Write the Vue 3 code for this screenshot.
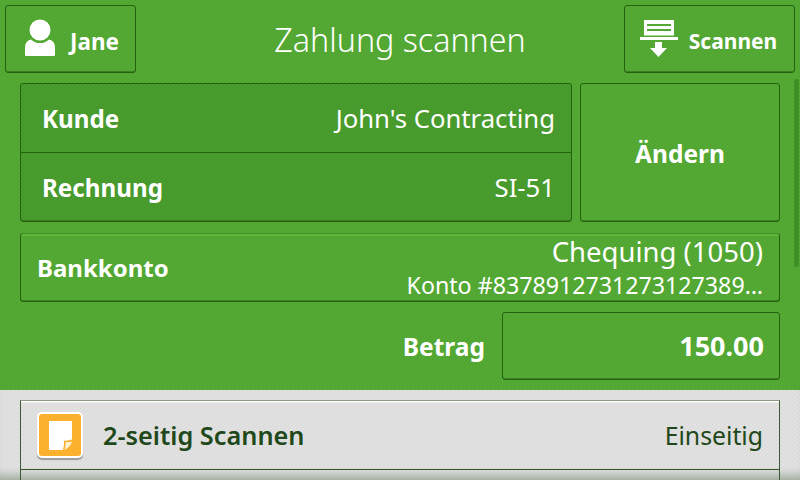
<script setup>
const rows = [
  { label: 'Kunde', value: "John's Contracting" },
  { label: 'Rechnung', value: 'SI-51' },
]
</script>

<template>
  <div class="screen">
    <section class="top">
      <header class="head">
        <button class="btn user">
          <svg width="30" height="38" viewBox="0 0 30 38">
            <circle cx="15" cy="11" r="10.500" fill="#fff" />
            <path d="M0 28q0-6 6-7.600A13 13 0 0 0 24 20.400q6 1.600 6 7.600v8q0 1-1 1H1q-1 0-1-1z" fill="#fff" />
          </svg>
          <span>Jane</span>
        </button>
        <h1>Zahlung scannen</h1>
        <button class="btn scan">
          <svg width="38" height="38" viewBox="0 0 38 38">
            <path d="M4 0h30v15.500H4zM7 4v2h24V4zM7 9v2h24V9z" fill="#fff" fill-rule="evenodd" />
            <rect y="17" width="38" height="3" fill="#fff" />
            <path d="M15 22h7v6h5l-8.500 9L10 28h5z" fill="#fff" />
          </svg>
          <span>Scannen</span>
        </button>
      </header>

      <div class="info">
        <div class="list">
          <div v-for="row in rows" :key="row.label" class="row">
            <strong>{{ row.label }}</strong>
            <span>{{ row.value }}</span>
          </div>
        </div>
        <button class="btn change"><span>Ändern</span></button>
      </div>

      <div class="bank">
        <strong>Bankkonto</strong>
        <div class="bank-values">
          <span class="account">Chequing (1050)</span>
          <span class="number">Konto #8378912731273127389…</span>
        </div>
      </div>

      <div class="amount">
        <strong>Betrag</strong>
        <div class="amount-box">150.00</div>
      </div>
      <i class="scrollbar"></i>
    </section>

    <section class="bottom">
      <div class="option">
        <span class="tile">
          <svg width="23" height="29" viewBox="0 0 23 29">
            <path d="M0 0h23v18.500q-4 1.500-8 1 .5 4.500-1 9.500H0z" fill="#fff" />
            <path d="M15.500 29q1.500-4 1-8 3 .5 6.500-.5-1.500 5.500-7.500 8.500z" fill="#fff3d2" />
          </svg>
        </span>
        <strong>2-seitig Scannen</strong>
        <span class="state">Einseitig</span>
      </div>
      <div class="option next"></div>
    </section>
  </div>
</template>

<style>
html, body { margin: 0; background: #52a832; }
</style>

<style scoped>
.screen {
  width: 800px;
  height: 480px;
  overflow: hidden;
  display: flex;
  flex-direction: column;
  font-family: "Noto Sans", "Open Sans", sans-serif;
  color: #fff;
}
strong { font-weight: 700; }
.top {
  position: relative;
  flex: none;
  height: 390px;
  box-sizing: border-box;
  padding: 5px 5px 0;
  background: linear-gradient(135deg, #55ab36 25%, #4fa530 25% 50%, #55ab36 50% 75%, #4fa530 75%) 0 0 / 4px 4px;
  display: flex;
  flex-direction: column;
}
.scrollbar {
  position: absolute;
  right: 1px;
  top: 79px;
  width: 5px;
  height: 188px;
  background: #3f8f26;
  border-radius: 2px;
}
.head {
  display: grid;
  grid-template-columns: 1fr auto 1fr;
  align-items: center;
  height: 68px;
}
h1 {
  margin: 2px 0 0;
  font-size: 32.200px;
  font-weight: 300;
  line-height: 66px;
}
.btn {
  box-sizing: border-box;
  display: flex;
  align-items: center;
  justify-content: center;
  padding: 0;
  background: transparent;
  border: 1px solid #24620f;
  border-radius: 3px;
  box-shadow: inset 0 -1px 0 #3a8020;
  color: #fff;
  font: 700 22.500px "Noto Sans", sans-serif;
}
.user { width: 131px; height: 68px; gap: 15px; justify-self: start; padding-left: 3px; }
.user svg { margin-top: -2px; }
.user span, .scan span { padding-top: 4px; }
.scan { width: 171px; height: 68px; gap: 11px; justify-self: end; font-size: 21px; padding-right: 2px; }
.info {
  display: flex;
  gap: 8px;
  margin: 10px 15px 0;
  height: 139px;
}
.list {
  flex: 1;
  box-sizing: border-box;
  border: 1px solid #24620f;
  border-radius: 3px;
  box-shadow: inset 0 -1px 0 #357a1d;
  background: linear-gradient(135deg, #4a9d2e 25%, #45982a 25% 50%, #4a9d2e 50% 75%, #45982a 75%) 0 0 / 4px 4px;
  display: flex;
  flex-direction: column;
}
.row {
  flex: 1;
  display: flex;
  align-items: center;
  justify-content: space-between;
  padding: 0 16px 0 21px;
  font-size: 25.700px;
}
.row strong { font-size: 24.200px; }
.row + .row { border-top: 1px solid #24620f; }
.change { width: 200px; font-size: 24.500px; }
.change span { padding-top: 2px; }
.bank {
  box-sizing: border-box;
  margin: 11px 15px 0;
  height: 69px;
  border: 1px solid #24620f;
  border-top-color: #3f8f22;
  border-radius: 3px;
  box-shadow: inset 0 2px 0 #5fb83a, inset 0 -1px 0 #3a8020;
  display: flex;
  align-items: center;
  justify-content: space-between;
  padding: 0 16px;
}
.bank strong { font-size: 24px; }
.bank-values {
  display: flex;
  flex-direction: column;
  align-items: flex-end;
  margin-bottom: 2px;
}
.account { font-size: 27.500px; line-height: 34px; }
.number { font-size: 23.200px; line-height: 28px; margin-top: 2px; }
.amount {
  display: flex;
  align-items: center;
  justify-content: flex-end;
  gap: 17px;
  margin: 10px 15px 0;
}
.amount strong { font-size: 24.500px; }
.amount-box {
  box-sizing: border-box;
  width: 278px;
  height: 68px;
  border: 1px solid #24620f;
  border-radius: 3px;
  box-shadow: inset 0 -1px 0 #3a8020;
  text-align: right;
  padding-right: 15px;
  font-size: 27px;
  font-weight: 700;
  line-height: 65px;
}
.bottom {
  flex: 1;
  min-height: 0;
  overflow: hidden;
  box-sizing: border-box;
  padding: 10px 20px 0;
  background: linear-gradient(135deg, #e3e3e3 25%, #dbdbdb 25% 50%, #e3e3e3 50% 75%, #dbdbdb 75%) 0 0 / 4px 4px;
  box-shadow: inset 0 -11px 8px -6px #a3ad9f;
}
.option {
  box-sizing: border-box;
  flex: none;
  height: 70px;
  display: flex;
  align-items: center;
  padding: 0 16px;
  color: #21481a;
  border: 1px solid #3a5c30;
  border-top-color: #8d9a88;
  border-bottom-color: #2f5525;
  box-shadow: inset 0 1.500px 0 #fff;
}
.option.next { height: 20px; border-top: 0; border-bottom: 0; box-shadow: none; }
.tile {
  box-sizing: border-box;
  width: 46px;
  height: 46px;
  margin-right: 20px;
  border: 2px solid #fff;
  border-radius: 5px;
  background: #fbb12d;
  box-shadow: 0 2px 1px #9b9b9b;
  display: flex;
  align-items: center;
  justify-content: center;
}
.option strong { font-size: 25.300px; font-weight: 600; }
.state { margin-left: auto; font-size: 24.800px; }
</style>
